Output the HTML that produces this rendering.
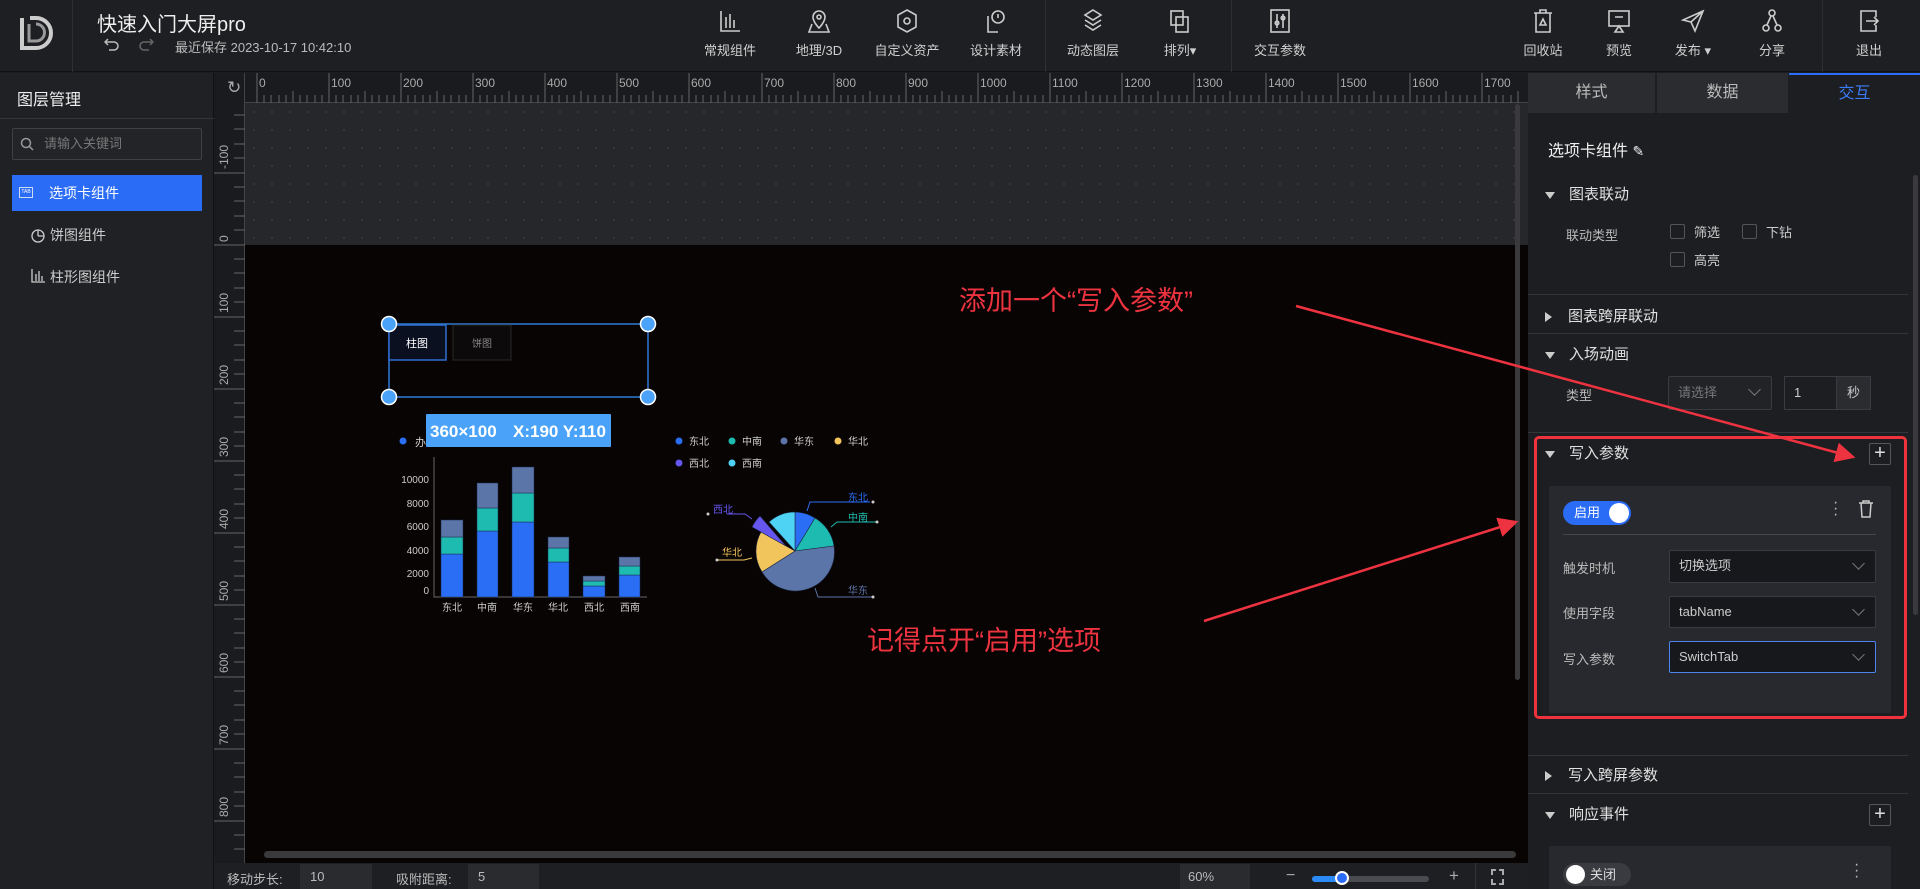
<!DOCTYPE html>
<html><head><meta charset="utf-8"><style>
*{margin:0;padding:0;box-sizing:border-box}
body{width:1920px;height:889px;overflow:hidden;background:#1c1d20;font-family:"Liberation Sans","Noto Sans CJK SC",sans-serif;color:#ccc;position:relative}
.a{position:absolute}
.tool{position:absolute;top:8px;width:90px;margin-left:-45px;text-align:center;font-size:13px;color:#d0d0d0}
.tool svg{display:block;margin:0 auto 6px;width:26px;height:26px}
.vd{position:absolute;top:0;width:1px;height:72px;background:#2e2f33}
.sec{position:absolute;left:1545px;font-size:15px;color:#e0e0e0}
.tri{display:inline-block;width:0;height:0;border-left:5px solid transparent;border-right:5px solid transparent;border-top:7px solid #ccc;margin-right:14px;vertical-align:middle}
.trir{display:inline-block;width:0;height:0;border-top:5px solid transparent;border-bottom:5px solid transparent;border-left:7px solid #ccc;margin-right:16px;vertical-align:middle}
.hl{position:absolute;left:1528px;width:380px;height:1px;background:#34353a}
.sel{position:absolute;background:#17181b;border:1px solid #3a3b40;border-radius:2px;font-size:13px;color:#ccc;padding-left:9px;line-height:30px}
.sel:after{content:"";position:absolute;right:12px;top:8px;width:8px;height:8px;border-right:1px solid #777;border-bottom:1px solid #777;transform:rotate(45deg)}
.lbl{position:absolute;left:1563px;font-size:13px;color:#bbb}
.plus{position:absolute;width:22px;height:22px;border:1px solid #55565b;border-radius:2px;color:#ddd;font-size:20px;line-height:19px;text-align:center}
</style></head><body>
<!-- header -->
<div class="a" style="left:0;top:0;width:1920px;height:72px;background:#1e1f22;border-bottom:1px solid #111"></div>
<svg class="a" style="left:18px;top:14px" width="40" height="40" viewBox="0 0 40 40"><path d="M4 4v30h14a15 15 0 0 0 0-30h-6" fill="none" stroke="#ccc" stroke-width="4"/><path d="M11 10v17h7a8.5 8.5 0 0 0 0-17" fill="none" stroke="#999" stroke-width="3"/></svg>
<div class="vd" style="left:72px"></div>
<div class="a" style="left:97px;top:8px;font-size:20px;color:#eee">快速入门大屏pro</div>
<svg class="a" style="left:104px;top:37px" width="16" height="14" fill="none" stroke="#bbb" stroke-width="1.5"><path d="M4 2L1 5l3 3M1 5h9a4 4 0 0 1 0 8H5"/></svg>
<svg class="a" style="left:138px;top:37px" width="16" height="14" fill="none" stroke="#666" stroke-width="1.5"><path d="M12 2l3 3-3 3M15 5H6a4 4 0 0 0 0 8h5"/></svg>
<div class="a" style="left:175px;top:37px;font-size:13px;color:#bbb">最近保存 2023-10-17 10:42:10</div>

<div class="tool" style="left:730px"><svg viewBox="0 0 26 26" fill="none" stroke="#ccc" stroke-width="1.6"><path d="M4 3v20h19M9 9v11M13 6v14M17 12v8"/></svg>常规组件</div>
<div class="tool" style="left:819px"><svg viewBox="0 0 26 26" fill="none" stroke="#ccc" stroke-width="1.6"><path d="M13 20s-6-6-6-11a6 6 0 0 1 12 0c0 5-6 11-6 11z"/><circle cx="13" cy="9" r="2"/><path d="M6 16l-3 8h20l-3-8"/></svg>地理/3D</div>
<div class="tool" style="left:907px"><svg viewBox="0 0 26 26" fill="none" stroke="#ccc" stroke-width="1.6"><path d="M13 2l9 5v12l-9 5-9-5V7z"/><circle cx="13" cy="13" r="3"/></svg>自定义资产</div>
<div class="tool" style="left:996px"><svg viewBox="0 0 26 26" fill="none" stroke="#ccc" stroke-width="1.6"><path d="M5 8v16h10"/><circle cx="15" cy="9" r="6"/><path d="M15 6v4"/></svg>设计素材</div>
<div class="vd" style="left:1045px"></div>
<div class="tool" style="left:1093px"><svg viewBox="0 0 26 26" fill="none" stroke="#ccc" stroke-width="1.6"><path d="M13 2l8 5-8 5-8-5z M5 12l8 5 8-5 M5 17l8 5 8-5"/></svg>动态图层</div>
<div class="tool" style="left:1180px"><svg viewBox="0 0 26 26" fill="none" stroke="#ccc" stroke-width="1.6"><rect x="4" y="3" width="12" height="14"/><rect x="9" y="9" width="12" height="15"/></svg>排列▾</div>
<div class="vd" style="left:1231px"></div>
<div class="tool" style="left:1280px"><svg viewBox="0 0 26 26" fill="none" stroke="#ccc" stroke-width="1.6"><rect x="4" y="2" width="18" height="22"/><path d="M10 6v14M16 6v14"/><circle cx="10" cy="15" r="1.8"/><circle cx="16" cy="10" r="1.8"/></svg>交互参数</div>
<div class="tool" style="left:1543px"><svg viewBox="0 0 26 26" fill="none" stroke="#ccc" stroke-width="1.6"><path d="M4 5h18M10 5V2h6v3M6 5v19h14V5"/><path d="M13 11l-3 6h6z"/></svg>回收站</div>
<div class="tool" style="left:1619px"><svg viewBox="0 0 26 26" fill="none" stroke="#ccc" stroke-width="1.6"><rect x="3" y="3" width="20" height="15"/><path d="M9 9h8M13 18l-4 6h8z"/></svg>预览</div>
<div class="tool" style="left:1693px"><svg viewBox="0 0 26 26" fill="none" stroke="#ccc" stroke-width="1.6"><path d="M23 3L3 12l8 2 4 9z M11 14l12-11"/></svg>发布 ▾</div>
<div class="tool" style="left:1772px"><svg viewBox="0 0 26 26" fill="none" stroke="#ccc" stroke-width="1.6"><circle cx="13" cy="5" r="3"/><circle cx="7" cy="20" r="3"/><circle cx="19" cy="20" r="3"/><path d="M12 8l-4 9M14 8l4 9"/></svg>分享</div>
<div class="vd" style="left:1822px"></div>
<div class="tool" style="left:1869px"><svg viewBox="0 0 26 26" fill="none" stroke="#ccc" stroke-width="1.6"><path d="M20 9V3H5v20h15v-6M10 13h12M18 9l4 4-4 4"/></svg>退出</div>

<!-- left panel -->
<div class="a" style="left:0;top:73px;width:214px;height:816px;background:#202125;border-right:1px solid #111"></div>
<div class="a" style="left:17px;top:86px;font-size:16px;color:#eee">图层管理</div>
<div class="a" style="left:0;top:118px;width:214px;height:1px;background:#34353a"></div>
<div class="a" style="left:12px;top:128px;width:190px;height:32px;border:1px solid #3f4045;border-radius:2px;background:#232428;font-size:13px;color:#777;line-height:30px;padding-left:31px">请输入关键词</div>
<svg class="a" style="left:20px;top:137px" width="14" height="14" fill="none" stroke="#999" stroke-width="1.5"><circle cx="6" cy="6" r="4.5"/><path d="M9.5 9.5l3.5 3.5"/></svg>
<div class="a" style="left:12px;top:175px;width:190px;height:36px;background:#2b6cf6;font-size:14px;color:#fff;line-height:36px;padding-left:37px">选项卡组件</div>
<div class="a" style="left:19px;top:187px;width:14px;height:11px;border:1px solid #cde;font-size:5px;color:#fff;line-height:9px;text-align:center">TAB</div>
<svg class="a" style="left:31px;top:227px" width="15" height="16" fill="none" stroke="#ccc" stroke-width="1.3"><circle cx="7" cy="9" r="6"/><path d="M7 9V3M7 9h6"/></svg>
<div class="a" style="left:50px;top:225px;font-size:14px;color:#ccc">饼图组件</div>
<svg class="a" style="left:31px;top:268px" width="15" height="15" fill="none" stroke="#ccc" stroke-width="1.3"><path d="M1 1v13h13M5 6v7M8 3v10M11 8v5"/></svg>
<div class="a" style="left:50px;top:267px;font-size:14px;color:#ccc">柱形图组件</div>

<!-- canvas -->
<div class="a" style="left:214px;top:73px;width:1314px;height:790px;background:#080403"></div>
<div class="a" style="left:245px;top:103px;width:1283px;height:142px;background:#26272b;background-image:radial-gradient(#3a3b40 1px,transparent 1px);background-size:18px 18px"></div>
<div class="a" style="left:214px;top:73px;width:1314px;height:30px;background:#1a1b1e;border-bottom:1px solid #444"></div>
<div class="a" style="left:214px;top:73px;width:31px;height:790px;background:#1a1b1e;border-right:1px solid #444"></div>
<div class="a" style="left:227px;top:78px;font-size:17px;color:#aaa">↻</div>
<svg class="a" style="left:245px;top:73px" width="1283" height="30">
<g stroke="#666" stroke-width="1">
<path d="M12 0v30M84 0v30M156 0v30M228 0v30M300 0v30M372 0v30M444 0v30M517 0v30M589 0v30M661 0v30M733 0v30M805 0v30M877 0v30M949 0v30M1021 0v30M1093 0v30M1165 0v30M1237 0v30"/>
<path d="M19 22v8M26 22v8M34 22v8M41 22v8M48 18v12M55 22v8M62 22v8M70 22v8M77 22v8M91 22v8M98 22v8M106 22v8M113 22v8M120 18v12M127 22v8M134 22v8M142 22v8M149 22v8M163 22v8M170 22v8M178 22v8M185 22v8M192 18v12M199 22v8M206 22v8M214 22v8M221 22v8M235 22v8M242 22v8M250 22v8M257 22v8M264 18v12M271 22v8M278 22v8M286 22v8M293 22v8M307 22v8M314 22v8M322 22v8M329 22v8M336 18v12M343 22v8M350 22v8M358 22v8M365 22v8M379 22v8M386 22v8M394 22v8M401 22v8M408 18v12M415 22v8M422 22v8M430 22v8M437 22v8M451 22v8M458 22v8M466 22v8M473 22v8M480 18v12M487 22v8M494 22v8M502 22v8M509 22v8M524 22v8M531 22v8M538 22v8M546 22v8M553 18v12M560 22v8M567 22v8M574 22v8M582 22v8M596 22v8M603 22v8M610 22v8M618 22v8M625 18v12M632 22v8M639 22v8M646 22v8M654 22v8M668 22v8M675 22v8M682 22v8M690 22v8M697 18v12M704 22v8M711 22v8M718 22v8M726 22v8M740 22v8M747 22v8M754 22v8M762 22v8M769 18v12M776 22v8M783 22v8M790 22v8M798 22v8M812 22v8M819 22v8M826 22v8M834 22v8M841 18v12M848 22v8M855 22v8M862 22v8M870 22v8M884 22v8M891 22v8M898 22v8M906 22v8M913 18v12M920 22v8M927 22v8M934 22v8M942 22v8M956 22v8M963 22v8M970 22v8M978 22v8M985 18v12M992 22v8M999 22v8M1006 22v8M1014 22v8M1028 22v8M1035 22v8M1042 22v8M1050 22v8M1057 18v12M1064 22v8M1071 22v8M1078 22v8M1086 22v8M1100 22v8M1107 22v8M1114 22v8M1122 22v8M1129 18v12M1136 22v8M1143 22v8M1150 22v8M1158 22v8M1172 22v8M1179 22v8M1186 22v8M1194 22v8M1201 18v12M1208 22v8M1215 22v8M1222 22v8M1230 22v8M1244 22v8M1251 22v8M1258 22v8M1266 22v8M1273 18v12"/>
</g>
<g fill="#aaa" font-size="12" font-family="Liberation Sans">
<text x="14" y="14">0</text><text x="86" y="14">100</text><text x="158" y="14">200</text><text x="230" y="14">300</text><text x="302" y="14">400</text><text x="374" y="14">500</text><text x="446" y="14">600</text><text x="519" y="14">700</text><text x="591" y="14">800</text><text x="663" y="14">900</text><text x="735" y="14">1000</text><text x="807" y="14">1100</text><text x="879" y="14">1200</text><text x="951" y="14">1300</text><text x="1023" y="14">1400</text><text x="1095" y="14">1500</text><text x="1167" y="14">1600</text><text x="1239" y="14">1700</text>
</g></svg>
<svg class="a" style="left:214px;top:103px" width="31" height="760">
<g stroke="#666"><path d="M0 70h31M0 142h31M0 214h31M0 286h31M0 358h31M0 430h31M0 502h31M0 574h31M0 646h31M0 718h31"/>
<path d="M20 12h11M20 26h11M20 41h11M20 55h11M20 84h11M20 98h11M20 113h11M20 127h11M20 156h11M20 170h11M20 185h11M20 199h11M20 228h11M20 242h11M20 257h11M20 271h11M20 300h11M20 314h11M20 329h11M20 343h11M20 372h11M20 386h11M20 401h11M20 415h11M20 444h11M20 458h11M20 473h11M20 487h11M20 516h11M20 530h11M20 545h11M20 559h11M20 588h11M20 602h11M20 617h11M20 631h11M20 660h11M20 674h11M20 689h11M20 703h11M20 732h11M20 746h11"/></g>
<g fill="#aaa" font-size="12" font-family="Liberation Sans">
<text transform="translate(14,66) rotate(-90)">-100</text><text transform="translate(14,139) rotate(-90)">0</text><text transform="translate(14,210) rotate(-90)">100</text><text transform="translate(14,282) rotate(-90)">200</text><text transform="translate(14,354) rotate(-90)">300</text><text transform="translate(14,426) rotate(-90)">400</text><text transform="translate(14,498) rotate(-90)">500</text><text transform="translate(14,570) rotate(-90)">600</text><text transform="translate(14,642) rotate(-90)">700</text><text transform="translate(14,714) rotate(-90)">800</text>
</g></svg>
<div class="a" style="left:1515px;top:104px;width:5px;height:576px;background:#3a3a3c;border-radius:3px"></div>
<div class="a" style="left:264px;top:851px;width:1252px;height:7px;background:#3a3a3c;border-radius:4px"></div>

<!-- charts -->
<svg class="a" style="left:0;top:0" width="1528" height="863" font-family="Liberation Sans,Noto Sans CJK SC,sans-serif">
<rect x="389" y="324" width="259" height="73" fill="none" stroke="#2f7bd8" stroke-width="1.5"/>
<rect x="389" y="325" width="57" height="35" fill="#0b1020" stroke="#2f6fd0" stroke-width="1.5"/>
<text x="417" y="347" fill="#fff" font-size="11" text-anchor="middle">柱图</text>
<rect x="453" y="325" width="58" height="35" fill="#0c0a0a" stroke="#2a2a2a"/>
<text x="482" y="347" fill="#888" font-size="10" text-anchor="middle">饼图</text>
<g fill="#4aa3f8" stroke="#fff" stroke-width="1.5"><circle cx="389" cy="324" r="7.5"/><circle cx="648" cy="324" r="7.5"/><circle cx="389" cy="397" r="7.5"/><circle cx="648" cy="397" r="7.5"/></g>
<circle cx="403" cy="441" r="3.5" fill="#2a6ef5"/><text x="415" y="446" fill="#ccc" font-size="11">办</text>
<rect x="426" y="414" width="185" height="33" fill="#4aa3f8" rx="1"/>
<text x="430" y="437" fill="#fff" font-size="17" font-weight="bold">360×100</text>
<text x="513" y="437" fill="#fff" font-size="17" font-weight="bold">X:190 Y:110</text>
<path d="M434 457V597H647" stroke="#555" fill="none" stroke-width="1.2"/>
<g fill="#ccc" font-size="10" text-anchor="end"><text x="429" y="483">10000</text><text x="429" y="507">8000</text><text x="429" y="530">6000</text><text x="429" y="554">4000</text><text x="429" y="577">2000</text><text x="429" y="594">0</text></g>
<g stroke="#1a2a50" stroke-width="0.5">
<rect x="441" y="554" width="22" height="43" fill="#2a6ef5"/><rect x="441" y="537" width="22" height="17" fill="#1ebcb0"/><rect x="441" y="520" width="22" height="17" fill="#5c75a8"/>
<rect x="477" y="531" width="21" height="66" fill="#2a6ef5"/><rect x="477" y="508" width="21" height="23" fill="#1ebcb0"/><rect x="477" y="483" width="21" height="25" fill="#5c75a8"/>
<rect x="512" y="522" width="22" height="75" fill="#2a6ef5"/><rect x="512" y="493" width="22" height="29" fill="#1ebcb0"/><rect x="512" y="467" width="22" height="26" fill="#5c75a8"/>
<rect x="548" y="562" width="21" height="35" fill="#2a6ef5"/><rect x="548" y="548" width="21" height="14" fill="#1ebcb0"/><rect x="548" y="537" width="21" height="11" fill="#5c75a8"/>
<rect x="583" y="586" width="22" height="11" fill="#2a6ef5"/><rect x="583" y="581" width="22" height="5" fill="#1ebcb0"/><rect x="583" y="576" width="22" height="5" fill="#5c75a8"/>
<rect x="619" y="575" width="21" height="22" fill="#2a6ef5"/><rect x="619" y="566" width="21" height="9" fill="#1ebcb0"/><rect x="619" y="557" width="21" height="9" fill="#5c75a8"/>
</g>
<g fill="#ccc" font-size="10" text-anchor="middle"><text x="452" y="611">东北</text><text x="487" y="611">中南</text><text x="523" y="611">华东</text><text x="558" y="611">华北</text><text x="594" y="611">西北</text><text x="630" y="611">西南</text></g>
<g font-size="10" fill="#ccc">
<circle cx="679" cy="441" r="3.5" fill="#2a6ef5"/><text x="689" y="445">东北</text>
<circle cx="732" cy="441" r="3.5" fill="#1ebcb0"/><text x="742" y="445">中南</text>
<circle cx="784" cy="441" r="3.5" fill="#5c75a8"/><text x="794" y="445">华东</text>
<circle cx="838" cy="441" r="3.5" fill="#f2c55c"/><text x="848" y="445">华北</text>
<circle cx="679" cy="463" r="3.5" fill="#6656f0"/><text x="689" y="467">西北</text>
<circle cx="732" cy="463" r="3.5" fill="#4fd3f5"/><text x="742" y="467">西南</text>
</g>
<g stroke="#1a2540" stroke-width="0.6">
<path d="M795 551L795 512A39 39 0 0 1 815 518Z" fill="#2a6ef5"/>
<path d="M795 551L815 518A39 39 0 0 1 834 546Z" fill="#1ebcb0"/>
<path d="M795 551L834 546A39 39 0 0 1 762 572Z" fill="#5c75a8"/>
<path d="M795 551L762 572A39 39 0 0 1 761 532Z" fill="#f2c55c"/>
<path d="M786 546L752 527A39 39 0 0 1 760 516Z" fill="#6656f0"/>
<path d="M795 551L769 522A39 39 0 0 1 795 512Z" fill="#4fd3f5"/>
</g>
<g fill="none" stroke-width="1">
<path d="M807 511l3-9h60" stroke="#2a6ef5"/><path d="M831 527l6-5h40" stroke="#1ebcb0"/><path d="M815 588l3 9h55" stroke="#5c75a8"/>
<path d="M752 519l-7-5h-18" stroke="#6656f0"/><path d="M752 558l-8 2h-27" stroke="#f2c55c"/>
</g>
<g font-size="10"><text x="848" y="501" fill="#2a6ef5">东北</text><text x="848" y="521" fill="#1ebcb0">中南</text><text x="848" y="594" fill="#5c75a8">华东</text><text x="713" y="513" fill="#6656f0">西北</text><text x="722" y="556" fill="#f2c55c">华北</text></g>
<g fill="#ccc"><circle cx="873" cy="502" r="1.5"/><circle cx="877" cy="522" r="1.5"/><circle cx="873" cy="597" r="1.5"/><circle cx="708" cy="514" r="1.5"/><circle cx="717" cy="560" r="1.5"/></g>
<text x="959" y="310" fill="#ee3340" font-size="27">添加一个“写入参数”</text>
<text x="867" y="650" fill="#ee3340" font-size="27">记得点开“启用”选项</text>
</svg>

<!-- bottom bar -->
<div class="a" style="left:214px;top:863px;width:1314px;height:26px;background:#1e1f22"></div>
<div class="a" style="left:227px;top:869px;font-size:13px;color:#bbb">移动步长:</div>
<div class="a" style="left:300px;top:864px;width:72px;height:25px;background:#2a2b2f;font-size:13px;line-height:25px;padding-left:10px;color:#bbb">10</div>
<div class="a" style="left:396px;top:869px;font-size:13px;color:#bbb">吸附距离:</div>
<div class="a" style="left:468px;top:864px;width:71px;height:25px;background:#2a2b2f;font-size:13px;line-height:25px;padding-left:10px;color:#bbb">5</div>
<div class="a" style="left:1180px;top:864px;width:70px;height:25px;background:#2a2b2f;font-size:13px;line-height:25px;padding-left:8px;color:#bbb">60%</div>
<div class="a" style="left:1286px;top:867px;font-size:16px;color:#aaa">−</div>
<div class="a" style="left:1312px;top:876px;width:117px;height:6px;background:#4a4b50;border-radius:3px"></div>
<div class="a" style="left:1312px;top:876px;width:30px;height:6px;background:#2b8bf6;border-radius:3px"></div>
<div class="a" style="left:1335px;top:871px;width:14px;height:14px;background:#2b6cf6;border:2px solid #fff;border-radius:50%"></div>
<div class="a" style="left:1449px;top:866px;font-size:17px;color:#aaa">+</div>
<div class="a" style="left:1475px;top:863px;width:1px;height:26px;background:#333"></div>
<div class="a" style="left:1491px;top:869px;width:13px;height:16px;border:2px dashed #aaa"></div>

<!-- right panel -->
<div class="a" style="left:1528px;top:73px;width:392px;height:816px;background:#1d1e21"></div>
<div class="a" style="left:1528px;top:73px;width:128px;height:40px;background:#2b2c30;border-right:1px solid #1d1e21;font-size:16px;color:#bbb;text-align:center;line-height:40px">样式</div>
<div class="a" style="left:1657px;top:73px;width:131px;height:40px;background:#2b2c30;font-size:16px;color:#bbb;text-align:center;line-height:40px">数据</div>
<div class="a" style="left:1789px;top:73px;width:131px;height:40px;border-top:2px solid #2b6cf6;font-size:16px;color:#3b7bf6;text-align:center;line-height:38px">交互</div>
<div class="a" style="left:1548px;top:137px;font-size:16px;color:#eee">选项卡组件 <span style="font-size:14px">✎</span></div>
<div class="a" style="left:1913px;top:175px;width:5px;height:440px;background:#3a3a3c;border-radius:3px"></div>
<div class="sec" style="top:183px"><span class="tri"></span>图表联动</div>
<div class="lbl" style="top:225px;left:1566px">联动类型</div>
<div class="a" style="left:1670px;top:224px;width:15px;height:15px;border:1px solid #555;border-radius:2px"></div><div class="a" style="left:1694px;top:222px;font-size:13px;color:#ccc">筛选</div>
<div class="a" style="left:1742px;top:224px;width:15px;height:15px;border:1px solid #555;border-radius:2px"></div><div class="a" style="left:1766px;top:222px;font-size:13px;color:#ccc">下钻</div>
<div class="a" style="left:1670px;top:252px;width:15px;height:15px;border:1px solid #555;border-radius:2px"></div><div class="a" style="left:1694px;top:250px;font-size:13px;color:#ccc">高亮</div>
<div class="hl" style="top:294px"></div>
<div class="sec" style="top:305px"><span class="trir"></span>图表跨屏联动</div>
<div class="hl" style="top:333px"></div>
<div class="sec" style="top:343px"><span class="tri"></span>入场动画</div>
<div class="lbl" style="top:385px;left:1566px">类型</div>
<div class="sel" style="left:1668px;top:376px;width:104px;height:34px;line-height:32px;color:#777;background:#222327">请选择</div>
<div class="a" style="left:1784px;top:376px;width:87px;height:34px;border:1px solid #3a3b40;font-size:13px;line-height:32px;padding-left:9px;color:#ccc">1<span style="position:absolute;right:0;top:0;width:34px;height:32px;background:#2b2c30;text-align:center;border-left:1px solid #3a3b40">秒</span></div>
<div class="hl" style="top:432px"></div>

<div class="a" style="left:1534px;top:436px;width:373px;height:283px;border:3px solid #f0323c;border-radius:5px"></div>
<div class="sec" style="top:442px"><span class="tri"></span>写入参数</div>
<div class="plus" style="left:1869px;top:443px">+</div>
<div class="a" style="left:1549px;top:486px;width:342px;height:227px;background:#28292e;border-radius:2px"></div>
<div class="a" style="left:1563px;top:501px;width:68px;height:24px;background:#2b6cf6;border-radius:12px;font-size:13px;color:#fff;line-height:24px;padding-left:11px">启用</div>
<div class="a" style="left:1609px;top:503px;width:20px;height:20px;background:#fff;border-radius:50%"></div>
<div class="a" style="left:1833px;top:500px;font-size:16px;color:#bbb;line-height:6px;width:4px">·<br>·<br>·</div>
<svg class="a" style="left:1858px;top:500px" width="16" height="18" fill="none" stroke="#ccc" stroke-width="1.5"><path d="M1 3h14M5 3V1h6v2M3 3l1 14h8l1-14"/></svg>
<div class="a" style="left:1563px;top:534px;width:313px;height:1px;background:#44454a"></div>
<div class="lbl" style="top:558px">触发时机</div>
<div class="sel" style="left:1669px;top:550px;width:207px;height:33px">切换选项</div>
<div class="lbl" style="top:603px">使用字段</div>
<div class="sel" style="left:1669px;top:596px;width:207px;height:32px">tabName</div>
<div class="lbl" style="top:649px">写入参数</div>
<div class="sel" style="left:1669px;top:641px;width:207px;height:32px;border-color:#4b86f0">SwitchTab</div>

<div class="hl" style="top:755px"></div>
<div class="sec" style="top:764px"><span class="trir"></span>写入跨屏参数</div>
<div class="hl" style="top:793px"></div>
<div class="sec" style="top:803px"><span class="tri"></span>响应事件</div>
<div class="plus" style="left:1869px;top:804px">+</div>
<div class="a" style="left:1549px;top:846px;width:342px;height:43px;background:#28292e"></div>
<div class="a" style="left:1563px;top:863px;width:68px;height:23px;background:#3a3b40;border-radius:12px;font-size:13px;color:#ddd;line-height:23px;padding-left:27px">关闭</div>
<div class="a" style="left:1566px;top:865px;width:19px;height:19px;background:#fff;border-radius:50%"></div>
<div class="a" style="left:1854px;top:862px;font-size:16px;color:#bbb;line-height:6px;width:4px">·<br>·<br>·</div>

<svg class="a" style="left:0;top:0;pointer-events:none" width="1920" height="889">
<defs><marker id="m" markerWidth="8" markerHeight="8" refX="7" refY="4" orient="auto"><path d="M0 0L8 4L0 8z" fill="#ee3340"/></marker></defs>
<path d="M1296 306L1853 457" stroke="#ee3340" stroke-width="2.5" marker-end="url(#m)"/>
<path d="M1204 621L1516 522" stroke="#ee3340" stroke-width="2.5" marker-end="url(#m)"/>
</svg>
</body></html>
